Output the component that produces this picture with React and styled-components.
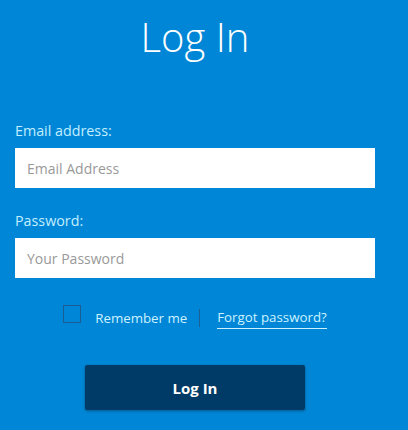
import React from "react";
import styled, { createGlobalStyle } from "styled-components";

const Global = createGlobalStyle`
  html, body { margin: 0; padding: 0; background: #0086d6; }
  body { font-family: "Open Sans", "Liberation Sans", sans-serif; }
  * { box-sizing: border-box; }
`;

const Page = styled.div`
  width: 408px;
  height: 430px;
  background: #0086d6;
  padding: 0 15px;
  overflow: hidden;
`;

const Column = styled.form`
  width: 360px;
  display: flex;
  flex-direction: column;
`;

const Title = styled.h1`
  margin: 13px 0 0;
  font-size: 40px;
  line-height: 48px;
  font-weight: 300;
  color: #ffffff;
  text-align: center;
`;

const Label = styled.label`
  display: block;
  font-size: 14.3px;
  line-height: 20px;
  color: #c2eeff;
  margin-top: ${(p) => p.$top}px;
  margin-bottom: 7px;
`;

const Input = styled.input`
  width: 360px;
  height: 40px;
  border: none;
  outline: none;
  background: #ffffff;
  padding: 0 12px;
  font-family: "Open Sans", "Liberation Sans", sans-serif;
  font-size: 14px;
  color: #333;
  &::placeholder { color: #999999; }
`;

const Row = styled.div`
  margin-top: 27px;
  display: flex;
  justify-content: center;
  align-items: flex-start;
`;

const Check = styled.span`
  width: 18px;
  height: 18px;
  margin-top: 0;
  border: 1px solid #1b5d92;
  margin-right: 14px;
`;

const RowText = styled.span`
  font-size: 13.3px;
  line-height: 22px;
  padding-top: 2px;
  color: #cdf2ff;
`;

const Divider = styled.span`
  width: 1px;
  height: 18px;
  margin: 4px 17px 0 12px;
  background: #1f5f93;
`;

const Link = styled.a`
  font-size: 13.3px;
  line-height: 21px;
  margin-top: 2px;
  color: #cdf2ff;
  text-decoration: none;
  border-bottom: 1px solid #cdf2ff;
`;

const Button = styled.button`
  align-self: center;
  margin-top: 36px;
  width: 220px;
  height: 45px;
  border: none;
  border-radius: 2px;
  background: #003a66;
  box-shadow: 0 1px 3px rgba(0, 0, 0, 0.35);
  color: #ffffff;
  font-family: "Open Sans", "Liberation Sans", sans-serif;
  font-weight: 700;
  font-size: 15px;
`;

export default function App() {
  return (
    <>
      <Global />
      <Page>
        <Column onSubmit={(e) => e.preventDefault()}>
          <Title>Log In</Title>
          <Label $top={60}>Email address:</Label>
          <Input type="email" placeholder="Email Address" />
          <Label $top={23}>Password:</Label>
          <Input type="password" placeholder="Your Password" />
          <Row>
            <Check />
            <RowText>Remember me</RowText>
            <Divider />
            <Link href="#">Forgot password?</Link>
          </Row>
          <Button type="submit">Log In</Button>
        </Column>
      </Page>
    </>
  );
}
